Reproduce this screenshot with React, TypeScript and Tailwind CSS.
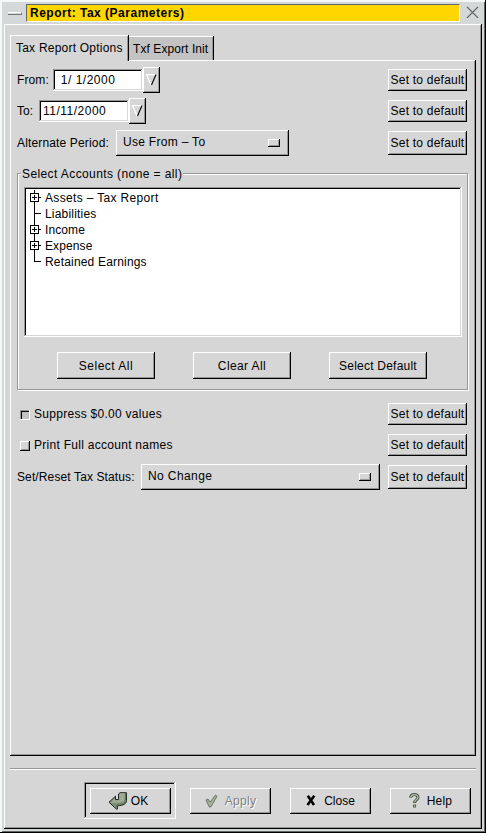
import type { ReactNode } from "react";

const raised =
  "shadow-[inset_-1px_-1px_#000,inset_1px_1px_#fff,inset_-2px_-2px_#969696]";
const sunken =
  "shadow-[inset_-1px_-1px_#fff,inset_1px_1px_#969696,inset_-2px_-2px_#d6d6d6,inset_2px_2px_#000]";

function Button({ className = "", children }: { className?: string; children: ReactNode }) {
  return (
    <button className={`flex shrink-0 items-center justify-center whitespace-nowrap bg-[#d6d6d6] ${raised} ${className}`}>
      {children}
    </button>
  );
}

function SetDefault({ className = "h-[22px]" }: { className?: string }) {
  return (
    <Button className={`ml-auto w-[79px] ${className}`}>
      <span className="tracking-[0.22px]">Set to default</span>
    </Button>
  );
}

function DateField({ value, className = "" }: { value: string; className?: string }) {
  return (
    <div className="flex items-center">
      <div className={`flex h-[22px] w-[90px] items-center whitespace-pre bg-white ${sunken} ${className}`}>
        {value}
      </div>
      <Button className="h-[26px] w-[17px]">
        <svg width="11" height="12" viewBox="0 0 11 12" fill="none">
          <path d="M0 0.5H10M0.5 0.5L5 11" stroke="#fff" strokeWidth="1.3" />
          <path d="M10 0.5L5.5 11" stroke="#000" strokeWidth="1.1" />
        </svg>
      </Button>
    </div>
  );
}

function OptionMenu({ label, className = "", labelClass }: { label: string; className?: string; labelClass: string }) {
  return (
    <div className={`flex h-[26px] items-center justify-between pl-[7px] pr-[9px] ${raised} ${className}`}>
      <span className={`-mt-[2px] ${labelClass}`}>{label}</span>
      <span className={`h-2 w-3 ${raised}`} />
    </div>
  );
}

type Account = { label: string; expandable?: boolean; last?: boolean; className: string };

function TreeRow({ label, expandable, last, className }: Account) {
  return (
    <li className="flex h-4 items-center">
      <svg width="14" height="16" className="mr-px" shapeRendering="crispEdges" fill="none" stroke="#000">
        <path d={last ? "M4.5 0V7.5H11" : "M4.5 0V16M4 7.5H11"} />
        {expandable && (
          <>
            <rect x="0.5" y="3.5" width="8" height="8" fill="#fff" />
            <path d="M2 7.5H7M4.5 5V10" />
          </>
        )}
      </svg>
      <span className={className}>{label}</span>
    </li>
  );
}

const accounts: Account[] = [
  { label: "Assets – Tax Report", expandable: true, className: "tracking-[0.34px]" },
  { label: "Liabilities", className: "tracking-[0.2px]" },
  { label: "Income", expandable: true, className: "tracking-[0.1px]" },
  { label: "Expense", expandable: true, className: "tracking-[0.1px]" },
  { label: "Retained Earnings", last: true, className: "tracking-[0.18px]" },
];

function OkIcon() {
  return (
    <svg width="20" height="18" viewBox="0 0 20 18">
      <path d="M1 10.2L7.5 4.2V7.5H10.5V2L12 .7H18.5V8.5C18.5 11.8 15.5 13.6 9.5 13.8V17L8.5 17.2Z" fill="#82917a" stroke="#20281f" strokeLinejoin="round" />
      <path d="M11.2 2.2L12.5 1.3H16.5V7C16.5 9.5 13 10.8 9 10.8H2.5L7 6.3V8.3H11.2Z" fill="#9dab93" />
      <path d="M17.6 2V8.5C17.3 11.2 14 12.8 8.8 12.9V15.7" stroke="#56644f" strokeWidth=".8" fill="none" />
    </svg>
  );
}

function ApplyIcon() {
  return (
    <svg width="13" height="14" viewBox="0 0 13 14">
      <path d="M1 6L3 5L5 8.3L10.5 1L12 2.3L5.8 13H4.3Z" fill="#a3b199" stroke="#6c766a" />
    </svg>
  );
}

function CloseIcon() {
  return (
    <svg width="10" height="11" viewBox="0 0 10 11">
      <path d="M1.8 .8L8 10M8.3 .8L1.5 10" stroke="#000" strokeWidth="2.6" />
    </svg>
  );
}

function HelpIcon() {
  return (
    <svg width="11" height="15" viewBox="0 0 11 15" fill="none">
      <path d="M1.6 4.6C1.8 2.4 3.2 1.6 5.2 1.6C7.6 1.6 9 2.8 9 4.6C9 6.8 5.6 6.8 5.6 10M5.6 11.5V14.5" stroke="#4c564a" strokeWidth="3" />
      <path d="M1.8 4C2.2 2.2 3.4 1.6 5.2 1.6C7.6 1.6 9 2.8 9 4.6C9 6.8 5.6 6.8 5.6 9.2M5.6 12.3V13.7" stroke="#b4c0aa" strokeWidth="1.2" />
    </svg>
  );
}

export default function App() {
  return (
    <div className="flex h-[833px] w-[486px] flex-col bg-[#d4d8d8] pl-1 pr-1 font-['Liberation_Sans',Arial,sans-serif] text-[12px] leading-[14px] text-black shadow-[inset_-1px_-1px_#000,inset_2px_2px_#f4f8f8,inset_-2px_-2px_#666]">
      <header className="mr-px flex h-6 shrink-0 items-start pt-1">
        <div className="flex h-[18px] w-[22px] items-center pl-1">
          <span className="h-[3px] w-[14px] border-b border-r border-t border-[#777] border-t-white bg-[#d6d6d6]" />
        </div>
        <h1 className="flex h-[18px] w-[434px] items-center border border-b-white border-l-[#666] border-r-white border-t-[#666] bg-[#ffd600] pl-[3px] text-[12px] font-bold tracking-[0.5px]">
          Report: Tax (Parameters)
        </h1>
        <svg width="14" height="14" viewBox="0 0 14 14" className="ml-[6px] mt-[2px]" fill="none">
          <path d="M1 2L12 13M12 2L1 13" stroke="#fff" />
          <path d="M1 1L12 12M12 1L1 12" stroke="#666" strokeWidth="1.4" />
        </svg>
      </header>

      <main className={`flex h-[805px] w-[478px] shrink-0 flex-col bg-[#d6d6d6] pl-[6px] pr-[6px] pt-[11px] ${raised}`}>
        <nav className="flex h-[25px] shrink-0 items-end">
          <div className="relative z-10 -mb-px h-[26px] w-[119px] bg-[#d6d6d6] pl-[6px] pt-[6px] shadow-[inset_-1px_0_#000,inset_1px_1px_#fff,inset_-2px_0_#969696]">
            <span className="whitespace-nowrap tracking-[0.22px]">Tax Report Options</span>
          </div>
          <div className="h-6 w-[85px] whitespace-nowrap bg-[#c3c3c3] pl-1 pt-[6px] tracking-[0.08px] shadow-[inset_-1px_0_#000,inset_0_1px_#fff,inset_-2px_0_#969696]">
            Txf Export Init
          </div>
        </nav>

        <section className={`flex h-[696px] w-[466px] shrink-0 flex-col pl-[7px] pr-[9px] pt-[7px] ${raised}`}>
          <div className="flex h-[26px] items-center">
            <span className="w-9 tracking-[0.1px]">From:</span>
            <DateField value=" 1/ 1/2000" className="pl-1 tracking-[0.5px]" />
            <SetDefault />
          </div>
          <div className="mt-[5px] flex h-[26px] items-center">
            <span className="w-[22px]">To:</span>
            <DateField value="11/11/2000" className="pl-1 tracking-[0.5px]" />
            <SetDefault />
          </div>
          <div className="mt-[6px] flex h-[26px] items-center">
            <span className="w-[99px] whitespace-nowrap tracking-[0.15px]">Alternate Period:</span>
            <OptionMenu label="Use From – To" className="w-[173px]" labelClass="tracking-[0.3px]" />
            <SetDefault className="h-6" />
          </div>

          <div className="relative mt-[17px] h-[217px] w-[451px] shrink-0 border border-[#969696] pl-[6px] pt-[13px] shadow-[1px_1px_#fff,inset_1px_1px_#fff]">
            <span className="absolute -top-[7px] left-[3px] whitespace-nowrap bg-[#d6d6d6] px-px tracking-[0.4px]">
              Select Accounts (none = all)
            </span>
            <ul className={`h-[150px] w-[438px] bg-white pl-[6px] pt-[3px] ${sunken}`}>
              {accounts.map((a) => (
                <TreeRow key={a.label} {...a} />
              ))}
            </ul>
            <div className="ml-[33px] mt-[15px] flex gap-[38px]">
              <Button className="h-[27px] w-[98px] tracking-[0.5px]">Select All</Button>
              <Button className="h-[27px] w-[98px] tracking-[0.4px]">Clear All</Button>
              <Button className="h-[27px] w-[98px] tracking-[0.22px]">Select Default</Button>
            </div>
          </div>

          <div className="mt-[13px] flex h-[22px] items-center">
            <span className="ml-[3px] mr-1 mt-[2px] size-[10px] bg-[#c3c3c3] shadow-[inset_-1px_-1px_#fff,inset_1px_1px_#969696,inset_2px_2px_#000]" />
            <span className="tracking-[0.28px]">Suppress $0.00 values</span>
            <SetDefault />
          </div>
          <div className="mt-[9px] flex h-[22px] items-center">
            <span className={`ml-[3px] mr-1 mt-[2px] size-[10px] ${raised}`} />
            <span className="tracking-[0.28px]">Print Full account names</span>
            <SetDefault />
          </div>
          <div className="mt-2 flex h-[26px] items-center">
            <span className="w-[124px] whitespace-nowrap tracking-[0.12px]">Set/Reset Tax Status:</span>
            <OptionMenu label="No Change" className="w-[239px]" labelClass="tracking-[0.4px]" />
            <SetDefault className="h-6" />
          </div>
        </section>

        <hr className="mt-3 h-[2px] w-[466px] shrink-0 border-b border-t border-b-white border-t-[#969696]" />

        <footer className="ml-[74px] mt-3 flex items-center">
          <div className={`flex h-[37px] w-[92px] items-center pl-[6px] ${sunken}`}>
            <Button className="h-[26px] w-[81px] gap-[3px] pr-[5px]">
              <OkIcon />
              OK
            </Button>
          </div>
          <Button className="ml-[14px] h-[26px] w-[81px] gap-[7px] text-[#808080]">
            <ApplyIcon />
            <span className="tracking-[0.3px] [text-shadow:1px_1px_#fff]">Apply</span>
          </Button>
          <Button className="ml-[19px] h-[26px] w-[81px] gap-2">
            <CloseIcon />
            Close
          </Button>
          <Button className="ml-[19px] h-[26px] w-[81px] gap-[7px]">
            <HelpIcon />
            <span className="tracking-[0.2px]">Help</span>
          </Button>
        </footer>
      </main>
    </div>
  );
}
